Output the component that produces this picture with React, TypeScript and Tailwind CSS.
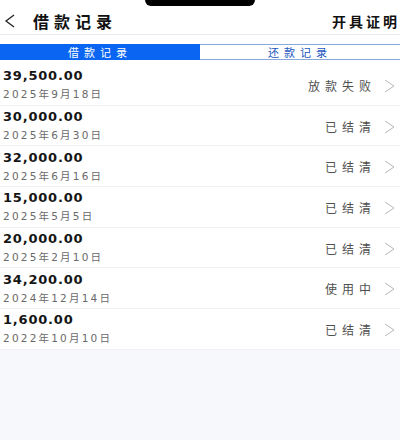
const records = [
  { amount: "39,500.00", date: "2025年9月18日", status: "放款失败" },
  { amount: "30,000.00", date: "2025年6月30日", status: "已结清" },
  { amount: "32,000.00", date: "2025年6月16日", status: "已结清" },
  { amount: "15,000.00", date: "2025年5月5日", status: "已结清" },
  { amount: "20,000.00", date: "2025年2月10日", status: "已结清" },
  { amount: "34,200.00", date: "2024年12月14日", status: "使用中" },
  { amount: "1,600.00", date: "2022年10月10日", status: "已结清" },
];

export default function App() {
  return (
    <div className="w-[400px] h-[440px] bg-[#f6f8fc] font-['DejaVu_Sans','Noto_Sans_CJK_SC',sans-serif] overflow-hidden">
      <div className="bg-white">
        {/* notch */}
        <div className="flex justify-center h-[8px]">
          <div className="w-[110px] h-[6px] bg-black rounded-b-[6px]" />
        </div>

        {/* header */}
        <div className="flex items-center h-[27px] border-b border-[#e6e9ef]">
          <svg width="14" height="16" viewBox="0 0 14 16" className="ml-[3px] mr-[16px]">
            <path d="M11 2 L3 8 L11 14" stroke="#222" strokeWidth="1.3" fill="none" />
          </svg>
          <span className="text-[16px] font-bold tracking-[5px] text-[#111] font-['Noto_Sans_CJK_SC',sans-serif]">借款记录</span>
          <span className="ml-auto text-[14px] font-bold tracking-[3px] text-[#111] font-['Noto_Sans_CJK_SC',sans-serif] whitespace-nowrap">开具证明</span>
        </div>

        {/* tabs */}
        <div className="flex mt-[9px] h-[16px] font-['Noto_Sans_CJK_SC',sans-serif]">
          <div className="w-1/2 bg-[#0a66f2] flex items-center justify-center text-[11px] tracking-[5px] text-white">
            借款记录
          </div>
          <div className="w-1/2 border-y border-[#8aa8d8] flex items-center justify-center text-[11px] tracking-[5px] text-[#1a55c0]">
            还款记录
          </div>
        </div>

        {/* list */}
        <div className="mt-[5px]">
          {records.map((r) => (
            <div key={r.amount + r.date} className="flex items-center h-[40.7px] border-b border-[#f0f2f5] pl-[3px] pr-[5px]">
              <div className="flex flex-col">
                <span className="text-[13px] font-bold text-[#151515] tracking-[0.8px] leading-[17px]">{r.amount}</span>
                <span className="text-[10.5px] text-[#6a6a6a] tracking-[2.2px] leading-[16px] mt-[2px]">{r.date}</span>
              </div>
              <span className="ml-auto mt-[2px] text-[12px] tracking-[5px] text-[#505050] font-['Noto_Sans_CJK_SC',sans-serif]">{r.status}</span>
              <svg width="11" height="14" viewBox="0 0 11 14" className="ml-[8px] mt-[2px]">
                <path d="M1 1 L10 7 L1 13" stroke="#b8b8b8" strokeWidth="1" fill="none" />
              </svg>
            </div>
          ))}
        </div>
      </div>
    </div>
  );
}
